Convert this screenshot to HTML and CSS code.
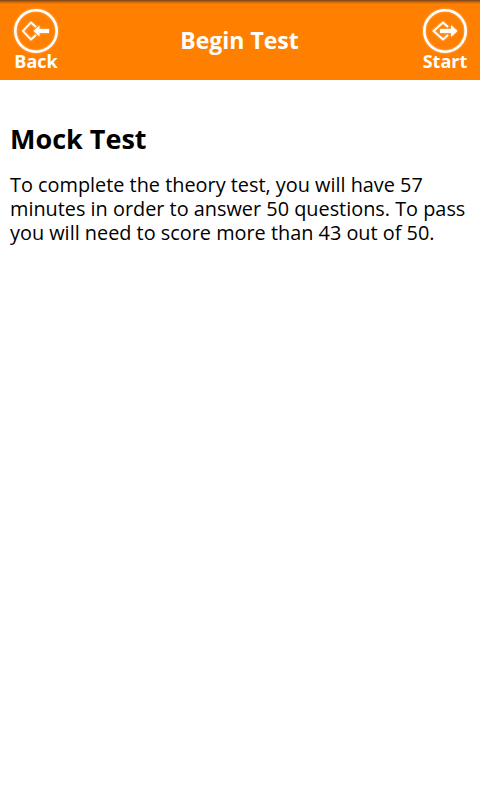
FILE: index.html
```html
<!DOCTYPE html>
<html lang="en">

<head>
    <meta charset="UTF-8">
    <title>Begin Test</title>
    <link rel="stylesheet" href="styles.css">
</head>

<body>
    <div class="topbar">
        <a class="navBtn">
            <svg class="navIcon" viewBox="0 0 46 46" width="46" height="46">
                <circle cx="23" cy="23" r="20.7" fill="none" stroke="#fff" stroke-width="2.6" />
                <path d="M23 19 L18 14.5 L10 23 L18 31.5 L23 27" fill="none" stroke="#fff" stroke-width="1.8" />
                <path d="M20.5 23 L26.5 17.5 V21 H36 V25 H26.5 V28.5 Z" fill="#fff" />
            </svg>
            <span>Back</span>
        </a>
        <h1 class="title">Begin Test</h1>
        <a class="navBtn">
            <svg class="navIcon" viewBox="0 0 46 46" width="46" height="46">
                <circle cx="23" cy="23" r="20.7" fill="none" stroke="#fff" stroke-width="2.6" />
                <path d="M26 19 L21 14.5 L11.5 23 L21 31.5 L26 27" fill="none" stroke="#fff" stroke-width="1.8" />
                <path d="M35.5 23 L29 17 V21 H18 V25 H29 V29 Z" fill="#fff" />
            </svg>
            <span>Start</span>
        </a>
    </div>

    <div class="content">
        <h2>Mock Test</h2>
        <p>To complete the theory test, you will have 57 minutes in order to answer 50 questions. To pass you will need to score more than 43 out of 50.</p>
    </div>
</body>

</html>
```

FILE: styles.css
```css
* {
    margin: 0;
    padding: 0;
    box-sizing: border-box;
}

body {
    font-family: 'Open Sans', 'Noto Sans', sans-serif;
    background: white;
    color: black;
}

.topbar {
    height: 80px;
    background: linear-gradient(#7a4310, #c46510 2px, #ff7f00 4px);
    display: flex;
    align-items: flex-start;
    justify-content: space-between;
    padding: 8px 12px 0 13px;
    color: white;
}

.navBtn {
    display: flex;
    flex-direction: column;
    align-items: center;
    font-size: 18px;
    font-weight: bold;
    line-height: 20px;
}

.navIcon {
    display: block;
    margin-bottom: -3px;
    filter: drop-shadow(0 0 1px rgba(255, 255, 255, 0.5));
}

.title {
    font-size: 23px;
    font-weight: bold;
    line-height: 30px;
    margin-top: 17px;
    margin-left: -2px;
}

.content {
    padding: 41px 10px 0;
}

.content h2 {
    font-size: 27px;
    line-height: 36px;
    margin-bottom: 16px;
}

.content p {
    font-size: 19.87px;
    line-height: 24px;
}
```
